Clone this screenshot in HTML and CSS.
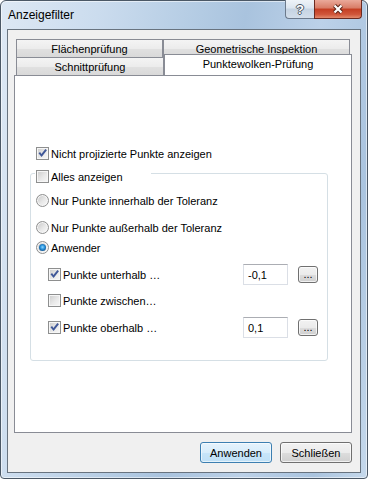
FILE: index.html
```html
<!DOCTYPE html>
<html lang="de">
<head>
    <meta charset="UTF-8">
    <meta name="viewport" content="width=device-width, initial-scale=1.0">
    <title>Anzeigefilter</title>
    <link rel="stylesheet" href="styles.css">
</head>
<body>
    <div class="window">
        <div class="titlebar">
            <span class="title">Anzeigefilter</span>
            <div class="caption-buttons">
                <span class="cap-btn help">?</span>
                <span class="cap-btn close">
                    <svg width="12" height="10" viewBox="0 0 12 10">
                        <path d="M2.5 1.5 L9.5 8.5 M9.5 1.5 L2.5 8.5" stroke="#5a2418" stroke-width="4.2" fill="none"/>
                        <path d="M2.5 1.5 L9.5 8.5 M9.5 1.5 L2.5 8.5" stroke="#fff" stroke-width="2.2" fill="none"/>
                    </svg>
                </span>
            </div>
        </div>

        <div class="client">
            <div class="tabs">
                <div class="tab-row">
                    <div class="tab tab-flaechen">Flächenprüfung</div>
                    <div class="tab tab-geo">Geometrische Inspektion</div>
                </div>
                <div class="tab-row">
                    <div class="tab tab-schnitt">Schnittprüfung</div>
                    <div class="tab tab-selected">Punktewolken-Prüfung</div>
                </div>

                <div class="tab-panel">
                    <label class="row top-check">
                        <span class="checkbox">
                            <svg width="11" height="11" viewBox="0 0 11 11"><polygon points="1.5,5.2 3.1,4 4.4,5.9 8.4,1 9.9,2.2 4.6,9" fill="#3f5798"/></svg>
                        </span>
                        Nicht projizierte Punkte anzeigen
                    </label>

                    <div class="group">
                        <label class="group-title">
                            <span class="checkbox"></span>
                            Alles anzeigen
                        </label>
                        <label class="row"><span class="radio"></span>Nur Punkte innerhalb der Toleranz</label>
                        <label class="row"><span class="radio"></span>Nur Punkte außerhalb der Toleranz</label>
                        <label class="row row-tight"><span class="radio checked"><span class="dot"></span></span>Anwender</label>

                        <div class="row sub-row">
                            <span class="checkbox">
                                <svg width="11" height="11" viewBox="0 0 11 11"><polygon points="1.5,5.2 3.1,4 4.4,5.9 8.4,1 9.9,2.2 4.6,9" fill="#3f5798"/></svg>
                            </span>
                            <span class="label-text">Punkte unterhalb …</span>
                            <input class="field" type="text" value="-0,1">
                            <span class="dots-btn">...</span>
                        </div>
                        <div class="row sub-row row-close">
                            <span class="checkbox"></span>
                            <span class="label-text">Punkte zwischen…</span>
                        </div>
                        <div class="row sub-row">
                            <span class="checkbox">
                                <svg width="11" height="11" viewBox="0 0 11 11"><polygon points="1.5,5.2 3.1,4 4.4,5.9 8.4,1 9.9,2.2 4.6,9" fill="#3f5798"/></svg>
                            </span>
                            <span class="label-text">Punkte oberhalb …</span>
                            <input class="field" type="text" value="0,1">
                            <span class="dots-btn">...</span>
                        </div>
                    </div>
                </div>
            </div>

            <div class="footer">
                <button class="btn btn-default">Anwenden</button>
                <button class="btn">Schließen</button>
            </div>
        </div>
    </div>
</body>
</html>
```

FILE: styles.css
```css
* {
    box-sizing: border-box;
}
body {
    margin: 0;
    background: #fff;
    font-family: "Liberation Sans", Arial, sans-serif;
    font-size: 11px;
    color: #000;
}
.window {
    width: 368px;
    height: 479px;
    display: flex;
    flex-direction: column;
    padding: 0 6px 5px 6px;
    border: 1px solid #4b5866;
    border-radius: 6px 6px 4px 4px;
    background: linear-gradient(100deg, #dde8f4 0%, #cbdcee 22%, #b3cbe3 45%, #a9c3de 55%, #bcd1e8 72%, #aac4df 88%, #c6d9ec 100%);
    box-shadow: inset 0 0 0 1px rgba(255,255,255,0.55);
}
.titlebar {
    height: 28px;
    display: flex;
    align-items: flex-start;
}
.title {
    font-size: 12px;
    line-height: 14px;
    margin-top: 7px;
    padding-left: 1px;
}
.caption-buttons {
    display: flex;
    margin-left: auto;
    margin-top: -1px;
    margin-right: -1px;
}
.cap-btn {
    height: 19px;
    display: flex;
    align-items: center;
    justify-content: center;
}
.help {
    width: 29px;
    border: 1px solid #6c7a8c;
    border-top: none;
    border-right: none;
    border-radius: 0 0 0 4px;
    background: linear-gradient(#eef3f8, #dce5ef 45%, #c5d3e2 50%, #d3deea);
    font-weight: bold;
    font-size: 13px;
    color: #fff;
    text-shadow: 1px 0 #4a5563, -1px 0 #4a5563, 0 1px #4a5563, 0 -1px #4a5563;
}
.close {
    width: 48px;
    border: 1px solid #6b2a20;
    border-top: none;
    border-radius: 0 0 4px 0;
    background: linear-gradient(#eaa99a, #d87c66 45%, #c43d22 50%, #d0563a 80%, #e38a6c);
}
.client {
    flex: 1;
    display: flex;
    flex-direction: column;
    padding: 9px 8px 9px 6px;
    border: 1px solid #68737f;
    background: #f0f0f0;
}
.tabs {
    flex: 1;
    display: flex;
    flex-direction: column;
}
.tab-row {
    display: flex;
    height: 18px;
    padding-left: 2px;
}
.tab {
    height: 18px;
    display: flex;
    align-items: center;
    justify-content: center;
    border: 1px solid #898c95;
    border-bottom: none;
    background: linear-gradient(#f4f4f4, #ececec 50%, #e0e0e0 55%, #d9d9d9);
}
.tab-flaechen {
    width: 147px;
}
.tab-geo {
    width: 187px;
}
.tab-schnitt {
    width: 148px;
}
.tab-selected {
    width: 188px;
    height: 21px;
    margin-top: -3px;
    margin-bottom: -1px;
    padding-bottom: 2px;
    background: #fff;
    position: relative;
    z-index: 1;
}
.tab-panel {
    flex: 1;
    padding: 67px 0 0 15px;
    border: 1px solid #898c95;
    background: #fff;
}
.row {
    display: flex;
    align-items: center;
    gap: 2px;
    height: 21px;
}
.top-check {
    margin-left: 6px;
}
.group {
    width: 298px;
    margin-top: 9px;
    display: flex;
    flex-direction: column;
    gap: 6px;
    padding: 0 9px 22px 5px;
    border: 1px solid #d5dfe5;
    border-radius: 3px;
}
.group-title {
    align-self: flex-start;
    display: flex;
    align-items: center;
    gap: 2px;
    width: 116px;
    height: 13px;
    margin: -4px 0 1px -1px;
    padding-left: 1px;
    background: #fff;
}
.row-tight {
    margin-top: -7px;
}
.row-close {
    margin-top: -1px;
}
.sub-row {
    margin-left: 12px;
}
.label-text {
    flex: 1;
}
.checkbox {
    width: 13px;
    height: 13px;
    flex: none;
    display: flex;
    border: 1px solid #8e8f8f;
    background: linear-gradient(135deg, #cbcbcb 0%, #e9e9e9 55%, #f8f8f8 100%);
    box-shadow: inset 0 0 0 1px #f6f6f6;
}
.radio {
    width: 13px;
    height: 13px;
    flex: none;
    display: flex;
    align-items: center;
    justify-content: center;
    border: 1px solid #8f9090;
    border-radius: 50%;
    background: linear-gradient(135deg, #c6c6c6 0%, #e8e8e8 55%, #fbfbfb 100%);
    box-shadow: inset 0 0 0 1px #f6f6f6;
}
.radio .dot {
    width: 7px;
    height: 7px;
    border-radius: 50%;
    background: radial-gradient(circle at 50% 45%, #8fd6ff 0%, #2a93dc 40%, #0f4c86 80%, #0b2f5a 100%);
}
.field {
    width: 45px;
    height: 21px;
    margin-right: 8px;
    padding: 0 0 0 4px;
    border: 1px solid #dbdfe6;
    border-top-color: #abadb3;
    font: inherit;
    color: #000;
    background: #fff;
}
.dots-btn {
    width: 20px;
    height: 17px;
    display: flex;
    align-items: center;
    justify-content: center;
    border: 1px solid #707070;
    border-radius: 3px;
    background: linear-gradient(#f2f2f2, #ebebeb 50%, #dddddd 51%, #cfcfcf);
    box-shadow: inset 0 0 0 1px rgba(255,255,255,0.7);
    line-height: 17px;
}
.footer {
    display: flex;
    justify-content: flex-end;
    gap: 8px;
    margin-top: 9px;
}
.btn {
    width: 72px;
    height: 21px;
    padding: 0;
    border: 1px solid #707070;
    border-radius: 3px;
    background: linear-gradient(#f2f2f2, #ebebeb 50%, #dddddd 51%, #cfcfcf);
    box-shadow: inset 0 0 0 1px rgba(255,255,255,0.7);
    font: inherit;
    color: #000;
}
.btn-default {
    border-color: #3c7fb1;
    background: linear-gradient(#e6f3fc, #d7edfb 50%, #c7e5f9 51%, #bfe0f6);
    box-shadow: inset 0 0 0 1px rgba(255,255,255,0.6);
}
```
